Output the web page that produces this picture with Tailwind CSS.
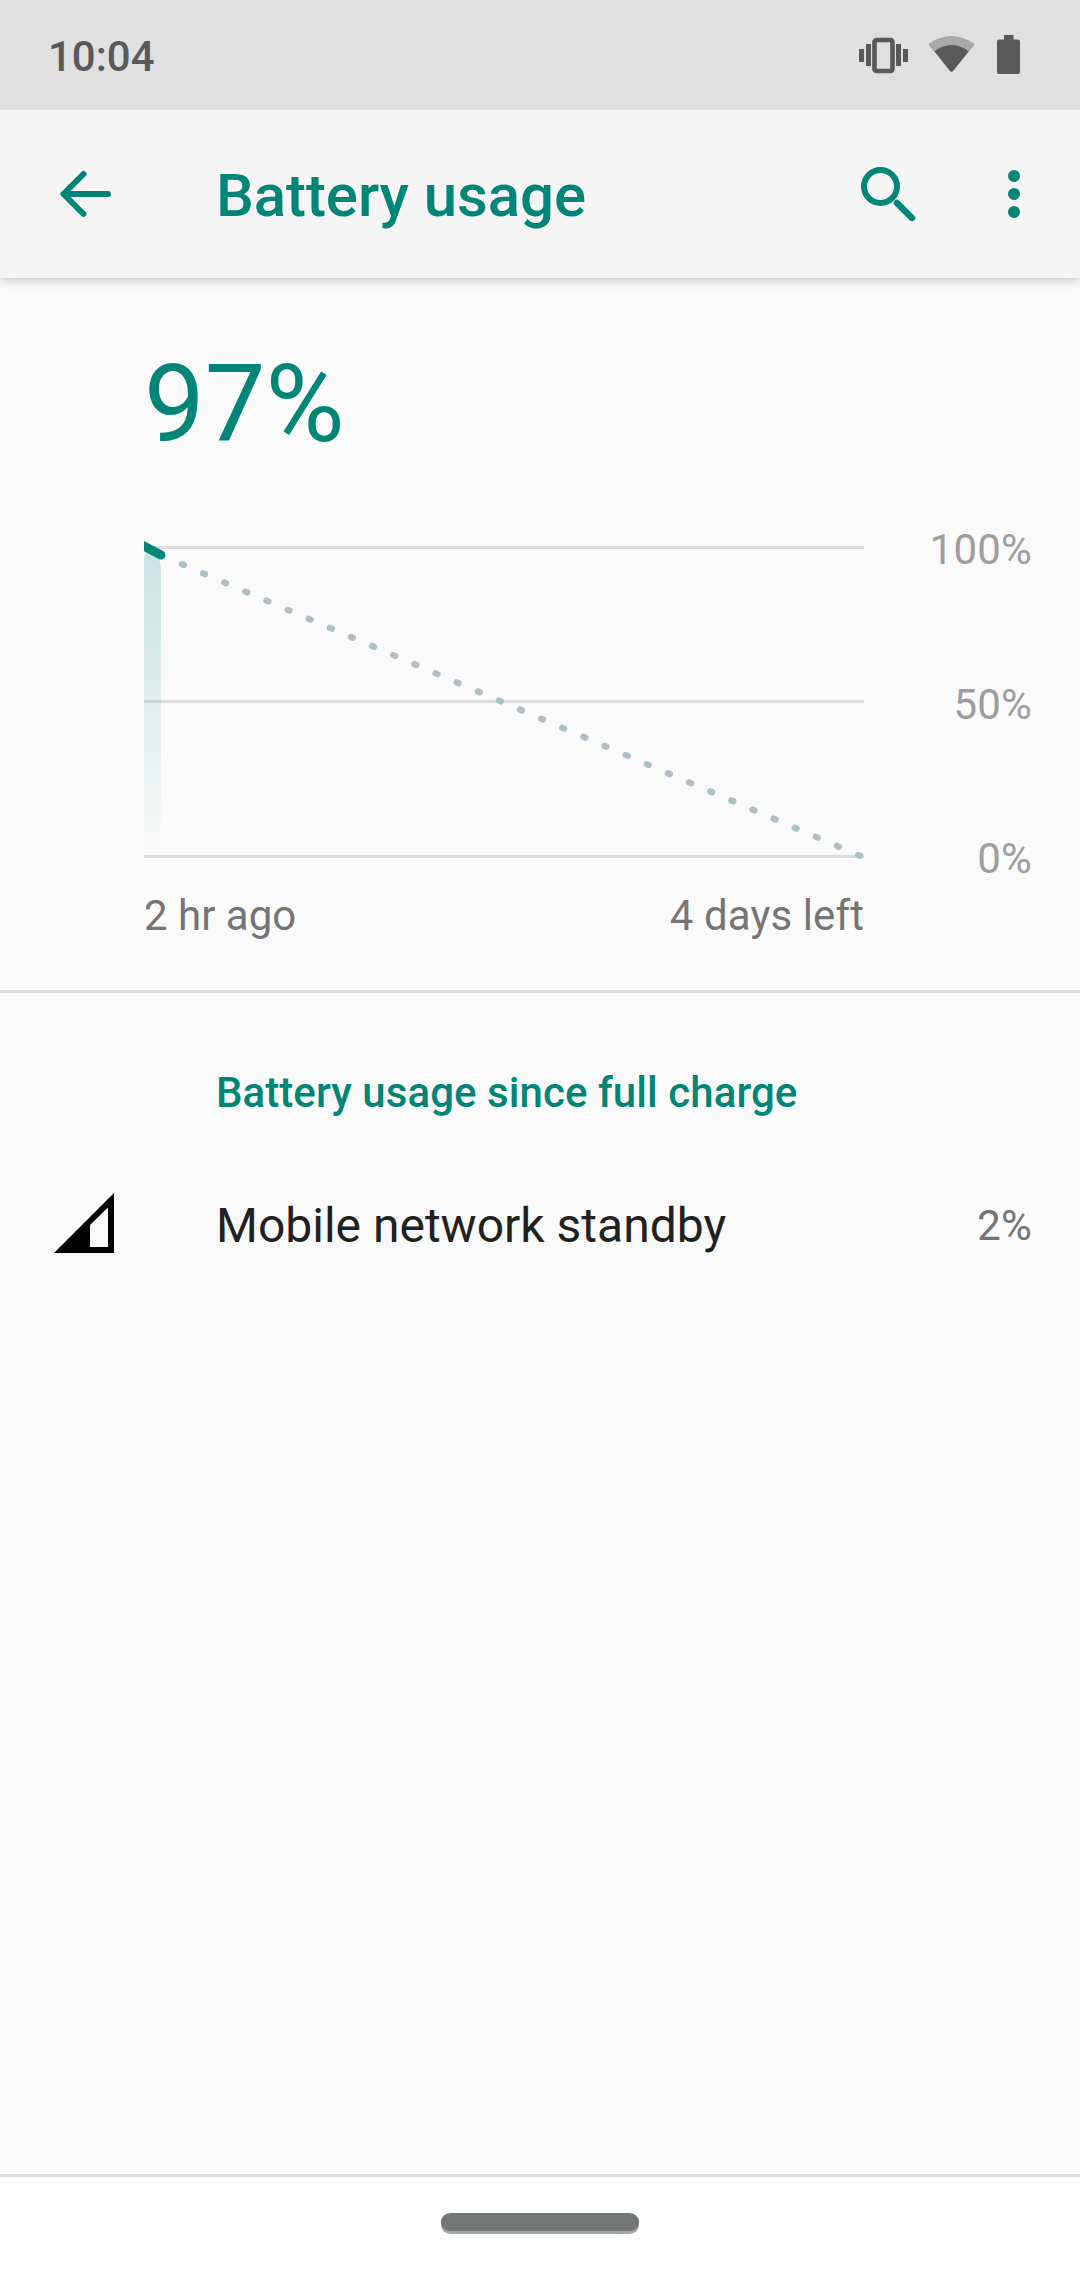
<!DOCTYPE html>
<html lang="en">
  <head>
    <meta charset="UTF-8" />
    <meta name="viewport" content="width=device-width, initial-scale=1.0" />
    <script src="https://cdn.jsdelivr.net/npm/@tailwindcss/browser@4"></script>
    <title>Battery usage</title>
  </head>

  <body class="bg-[#fafafa]">
    <div class="w-[1080px] h-[2270px] flex flex-col overflow-hidden bg-[#fafafa] font-[Roboto,sans-serif] text-[42px] leading-[50px] text-[#757575]">
      <!-- Status bar -->
      <div class="relative z-10 h-[110px] shrink-0 flex items-center justify-between pl-12 pr-[60px] bg-[#e0e0e0] text-[#595959]">
        <span class="font-medium pt-[3px]">10:04</span>
        <svg class="w-[162px] h-[42px]" viewBox="858 34 162 42" fill="currentColor">
          <rect x="859" y="49" width="5" height="13" />
          <rect x="866" y="44" width="5" height="22" />
          <rect x="896" y="44" width="5" height="22" />
          <rect x="903" y="49" width="5" height="13" />
          <rect x="874.5" y="40" width="18" height="31" rx="2" fill="none" stroke="currentColor" stroke-width="4.6" />
          <path d="M929 43.500 Q940 36 951.500 36 Q963 36 974 43.500 Q974.600 44.500 974 45.500 L968.500 52 L934.500 52 L929 45.500 Q928.400 44.500 929 43.500Z" fill="#a9a9a9" />
          <path d="M934.500 51.500 Q942 45 951.500 45 Q961 45 968.700 51.500 L953.500 70.500 Q951.500 73 949.500 70.500Z" />
          <path d="M1004 35h9.500v4.500h4.500q2 0 2 2v30.500q0 2-2 2h-19q-2 0-2-2v-30.500q0-2 2-2h5z" />
        </svg>
      </div>

      <!-- App bar -->
      <header class="relative h-[168px] shrink-0 flex items-center bg-[#f5f5f5] text-[#008577] shadow-[0_3px_10px_rgba(0,0,0,0.18)]">
        <svg class="w-[72px] h-[72px] ml-12 shrink-0" viewBox="48 158 72 72" fill="none" stroke="currentColor" stroke-width="6" stroke-linecap="round" stroke-linejoin="round">
          <path d="M108 194H63.500M83.500 174L63.500 194L83.500 214" />
        </svg>
        <h1 class="ml-24 pt-1 grow text-[60px] leading-[70px] font-medium tracking-[-0.08px]">Battery usage</h1>
        <svg class="w-[72px] h-[72px] shrink-0" viewBox="852 158 72 72" fill="none" stroke="currentColor" stroke-width="6" stroke-linecap="round">
          <circle cx="880.500" cy="186.500" r="16.500" />
          <path d="M897 203L912 218" stroke-width="6.500" />
        </svg>
        <svg class="w-[72px] h-[72px] ml-[54px] mr-[30px] shrink-0" viewBox="978 158 72 72" fill="currentColor">
          <circle cx="1014" cy="176" r="6" />
          <circle cx="1014" cy="194" r="6" />
          <circle cx="1014" cy="212" r="6" />
        </svg>
      </header>

      <!-- Battery level and chart -->
      <section class="h-[715px] shrink-0 pl-36 pr-12 pt-[66px] border-b-3 border-[#dcdcdc]">
        <div class="text-[108px] leading-[120px] text-[#008577]">97%</div>
        <div class="mt-[60px] flex justify-between">
          <svg class="w-[720px] h-[338px] shrink-0" viewBox="0 524 720 338">
            <defs>
              <linearGradient id="level" x1="0" y1="546" x2="0" y2="855" gradientUnits="userSpaceOnUse">
                <stop offset="0" stop-color="#008577" stop-opacity="0.2" />
                <stop offset="1" stop-color="#008577" stop-opacity="0" />
              </linearGradient>
            </defs>
            <path d="M0 546h720v3H0zM0 700h720v3H0zM0 855h720v3H0z" fill="#dcdcdc" />
            <path d="M0 560Q1 550 6 549L13 554Q17 562 17 572V855H0z" fill="url(#level)" />
            <path d="M38 564.300L719.500 857.300" stroke="#b0bec5" stroke-width="6.400" stroke-linecap="round" stroke-dasharray="2 21" />
            <path d="M-6 543L17 555" stroke="#008577" stroke-width="9" stroke-linecap="round" />
          </svg>
          <div class="h-[360px] pt-px flex flex-col justify-between text-right text-[#9e9e9e] tracking-[0.2px]">
            <span>100%</span>
            <span>50%</span>
            <span>0%</span>
          </div>
        </div>
        <div class="w-[720px] mt-[7px] flex justify-between">
          <span>2 hr ago</span>
          <span class="tracking-[0.1px]">4 days left</span>
        </div>
      </section>

      <!-- Usage list -->
      <section class="grow">
        <h2 class="ml-[216px] mt-[75px] font-medium text-[#008577] tracking-[0.06px]">Battery usage since full charge</h2>
        <div class="mt-[69px] flex items-center pl-12 pr-12">
          <svg class="w-[72px] h-[72px] shrink-0" viewBox="0 0 24 24">
            <path d="M2 22H22V2z" />
            <path d="M14 12.700L20 6.800V20H14z" fill="#fafafa" />
          </svg>
          <span class="ml-24 pt-[5px] grow text-[48px] leading-[56px] text-[#212121]">Mobile network standby</span>
          <span class="pt-[5px] tracking-[0.2px]">2%</span>
        </div>
      </section>

      <!-- Gesture bar -->
      <footer class="h-24 shrink-0 flex justify-center pt-9 bg-white border-t-3 border-[#dcdcdc]">
        <div class="w-[198px] h-[18px] rounded-full bg-[#727676] shadow-[0_3px_0_#a5a5a5]"></div>
      </footer>
    </div>
  </body>
</html>
